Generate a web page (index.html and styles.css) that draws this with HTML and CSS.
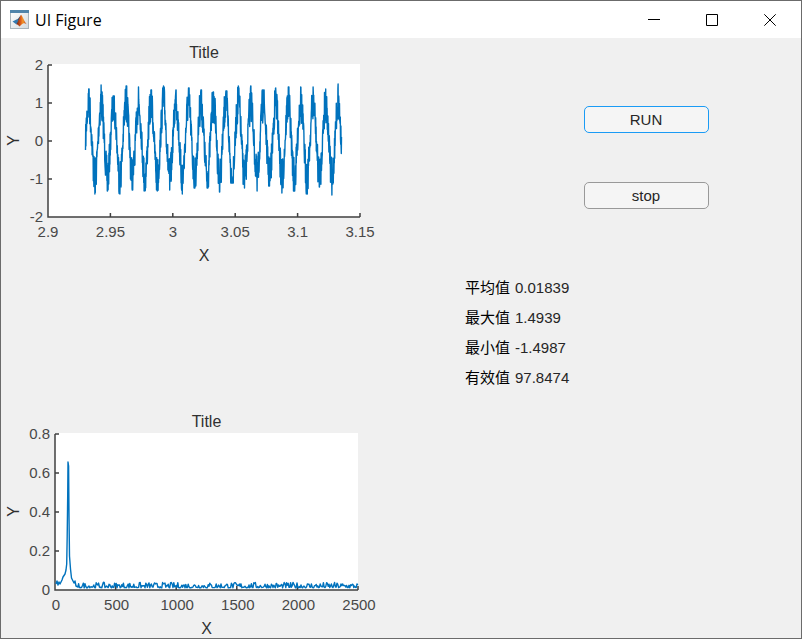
FILE: index.html
```html
<!DOCTYPE html>
<html lang="zh-CN">
<head>
<meta charset="utf-8">
<meta name="viewport" content="width=device-width, initial-scale=1">
<title>UI Figure</title>
<link rel="stylesheet" href="styles.css">
</head>
<body>
<div class="window">
  <header class="titlebar">
    <svg class="app-icon" viewBox="0 0 20 20" aria-hidden="true">
      <defs>
        <linearGradient id="face" x1="0" y1="0" x2="1" y2="1">
          <stop offset="0" stop-color="#ffffff"/><stop offset="1" stop-color="#d3dade"/>
        </linearGradient>
        <linearGradient id="flame" x1="0" y1="0" x2="1" y2="0">
          <stop offset="0" stop-color="#6b1f16"/><stop offset=".45" stop-color="#e0601c"/>
          <stop offset=".65" stop-color="#f39a2b"/><stop offset="1" stop-color="#b7321a"/>
        </linearGradient>
      </defs>
      <rect x=".5" y=".5" width="18" height="18" fill="url(#face)" stroke="#a9b4bb"/>
      <rect x="0" y="0" width="19" height="3" fill="#4f84aa"/>
      <path d="M2.5 11.5 L7 9.3 L9.2 11.6 L6.2 14.2 Z" fill="#3479ae"/>
      <path d="M7 9.3 C8.6 9 9.6 6.5 11 5 L9.2 11.6 Z" fill="#234e78"/>
      <path d="M6.2 14.2 C7.8 13 9.5 7 11.1 4.8 C12.7 6.3 14.2 11.5 16.6 14.2 C14.4 12.8 13.2 13.2 11.4 14.8 L9.4 16.6 C8.7 15.2 7.6 14.3 6.2 14.2 Z" fill="url(#flame)"/>
    </svg>
    <h1 class="caption">UI Figure</h1>
    <button class="win-button" type="button" aria-label="Minimize">
      <svg viewBox="0 0 12 12"><path d="M0 5.5H12"/></svg>
    </button>
    <button class="win-button" type="button" aria-label="Maximize">
      <svg viewBox="0 0 12 12"><path d="M.5 .5H11.5V11.5H.5Z"/></svg>
    </button>
    <button class="win-button" type="button" aria-label="Close">
      <svg viewBox="0 0 12 12"><path d="M.3 .3L11.7 11.7M11.7 .3L.3 11.7"/></svg>
    </button>
  </header>
  <main class="content">
    <section class="charts">
      <svg class="chart" id="signal" viewBox="0 0 384 232" role="img" aria-label="Signal"></svg>
      <svg class="chart" id="spectrum" viewBox="0 0 384 232" role="img" aria-label="Spectrum"></svg>
    </section>
    <section class="panel">
      <div class="actions">
        <button class="push push-active" type="button">RUN</button>
        <button class="push" type="button">stop</button>
      </div>
      <dl class="stats">
        <dt>平均值</dt><dd>0.01839</dd>
        <dt>最大值</dt><dd>1.4939</dd>
        <dt>最小值</dt><dd>-1.4987</dd>
        <dt>有效值</dt><dd>97.8474</dd>
      </dl>
    </section>
  </main>
</div>
<script src="charts.js"></script>
</body>
</html>
```
FILE: styles.css
```css
* {
  box-sizing: border-box;
}

body {
  margin: 0;
  background: #f0f0f0;
  color: #262626;
  font: 15px/30px "Liberation Sans", "Noto Sans CJK SC", sans-serif;
}

.window {
  display: flex;
  flex-direction: column;
  min-height: 100vh;
  border: 1px solid #6b6b6b;
}

.titlebar {
  display: flex;
  height: 37px;
  align-items: center;
  padding: 0 2px 0 9px;
  background: #fff;
}

.app-icon {
  width: 20px;
  height: 20px;
}

.caption {
  flex: 1;
  margin: 0 0 0 5px;
  color: #000;
  font: 16px/20px "Open Sans", sans-serif;
}

.win-button {
  display: flex;
  width: 58px;
  height: 100%;
  align-items: center;
  justify-content: center;
  padding: 0;
  border: 0;
  background: transparent;
}

.win-button svg {
  width: 12px;
  height: 12px;
  fill: none;
  stroke: #000;
}

.content {
  display: grid;
  flex: 1;
  grid-template-columns: 384fr 416fr;
}

.charts {
  display: flex;
  flex-direction: column;
  justify-content: space-between;
}

.chart {
  display: block;
  width: 100%;
}

.chart text {
  fill: #484848;
  font-size: 15px;
}

.chart .name {
  fill: #303030;
  font-size: 16px;
}

.middle {
  text-anchor: middle;
}

.chart .end {
  text-anchor: end;
}

.plot {
  fill: #fff;
}

.axis {
  fill: none;
  stroke: #404040;
  stroke-width: 1.5;
}

.trace {
  fill: none;
  stroke: #0072bd;
  stroke-linejoin: round;
  stroke-width: 1.4;
}

.panel {
  padding: 68px 80px 0;
}

.actions {
  display: flex;
  flex-direction: column;
  align-items: center;
  gap: 49px;
  padding-left: 106px;
}

.push {
  width: 125px;
  height: 27px;
  padding: 0;
  border: 1px solid #999;
  border-radius: 5px;
  background: #f5f5f5;
  color: #262626;
  font: inherit;
  line-height: 24px;
}

.push-active {
  border-color: #1a9bf5;
}

.stats {
  display: grid;
  grid-template-columns: max-content max-content;
  column-gap: 5px;
  margin: 64px 0 0;
}

.stats dt {
  color: #000;
}

.stats dd {
  margin: 0;
}
```
FILE: charts.js
```js
const NS = "http://www.w3.org/2000/svg";

function add(parent, tag, attrs, text) {
  const node = document.createElementNS(NS, tag);
  for (const key in attrs) node.setAttribute(key, attrs[key]);
  if (text !== undefined) node.textContent = text;
  parent.appendChild(node);
}

// Repeatable noise in the range 0..1.
let seed = 7;
function noise() {
  seed = (seed * 16807) % 2147483647;
  return seed / 2147483647;
}

function drawChart(id, c) {
  const svg = document.getElementById(id);
  const { left, right, top, bottom } = c;
  add(svg, "rect", { class: "plot", x: left, y: top, width: right - left, height: bottom - top });
  let d = `M${left} ${top + 1}V${bottom}H${right}`;
  c.xs.forEach((label, i) => {
    const x = left + (right - left) * i / (c.xs.length - 1);
    d += `M${x} ${bottom}v-4`;
    add(svg, "text", { class: "middle", x: x + c.shift, y: bottom + 20 }, label);
  });
  c.ys.forEach((label, i) => {
    const y = bottom - (bottom - top - 1) * i / (c.ys.length - 1);
    d += `M${left} ${y}h4`;
    add(svg, "text", { class: "end", x: left - 5, y: y + 5 }, label);
  });
  add(svg, "path", { class: "axis", d });
  add(svg, "path", { class: "trace", d: "M" + c.points.map(p => p[0].toFixed(1) + " " + p[1].toFixed(1)).join("L") });
  const mid = (left + right) / 2;
  add(svg, "text", { class: "name middle", x: mid, y: top - 6 }, "Title");
  add(svg, "text", { class: "name middle", x: mid, y: bottom + 44 }, "X");
  add(svg, "text", { class: "name middle", transform: `translate(18 ${(top + bottom) / 2}) rotate(-90)` }, "Y");
}

// Sine signal: highest and lowest value of each cycle, in plot units.
const highs = [50, 46, 57, 47, 48, 51, 47, 51, 49, 51, 53, 52, 47, 47, 51, 49, 48, 48, 48, 50, 45];
const lows = [157, 154, 157, 153, 154, 154, 153, 157, 151, 151, 155, 146, 151, 154, 149, 156, 154, 157, 150, 158];
const signal = [[84.5, 112]];
for (let x = 84.7; x < 340.3; x += 0.2) {
  const phase = (x - 87.7) / 12.47;
  const wave = Math.cos(phase * 2 * Math.PI);
  const high = highs[Math.max(0, Math.min(20, Math.round(phase)))];
  const low = lows[Math.max(0, Math.min(19, Math.floor(phase)))];
  const center = 102 - wave * 37;
  let y = center + (noise() - 0.5) * (26 + 14 * Math.abs(wave));
  if (Math.abs(phase - Math.round(phase)) < 0.009) y = high;
  if (Math.abs(phase - Math.floor(phase) - 0.5) < 0.009) y = low;
  signal.push([x, Math.max(high + 1, Math.min(low - 1, y))]);
}
signal.push([340.5, 99]);

drawChart("signal", {
  left: 47, right: 359, top: 26, bottom: 179, shift: 0, points: signal,
  xs: ["2.9", "2.95", "3", "3.05", "3.1", "3.15"],
  ys: ["-2", "-1", "0", "1", "2"]
});

// Spectrum: one line at about 100 Hz above a low noise floor.
const spectrum = [[55, 178], [56, 175], [57, 179], [58, 176], [59, 178], [60, 176], [61, 174], [62, 171],
  [64, 168], [65, 164], [65.7, 158], [66.2, 130], [66.7, 90], [67, 56], [67.6, 60], [68, 110],
  [68.5, 150], [69.5, 163], [70.5, 172], [72, 175], [73, 177], [74, 175], [75, 180], [77, 181]];
for (let x = 77.6; x < 357; x += 0.8) {
  spectrum.push([x, 181.8 - Math.pow(noise(), 2) * 5.5]);
}

drawChart("spectrum", {
  left: 54, right: 357, top: 27, bottom: 184, shift: 1, points: spectrum,
  xs: ["0", "500", "1000", "1500", "2000", "2500"],
  ys: ["0", "0.2", "0.4", "0.6", "0.8"]
});
```
